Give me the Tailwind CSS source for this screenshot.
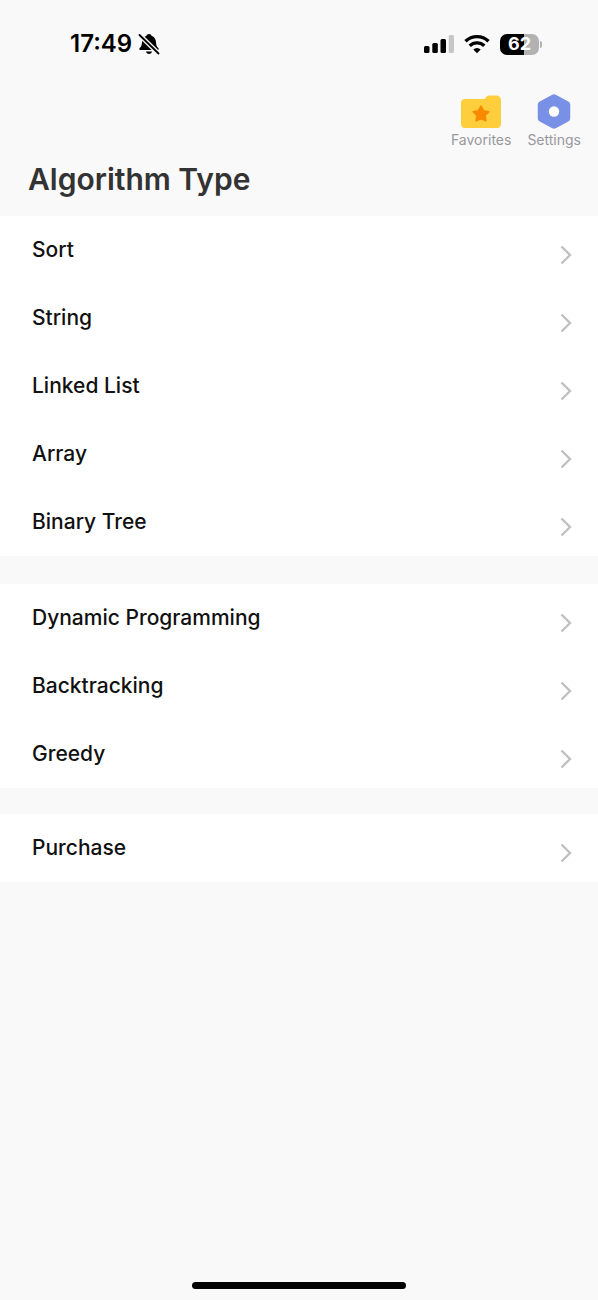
<!DOCTYPE html>
<html lang="en">

<head>
    <meta charset="UTF-8">
    <meta name="viewport" content="width=device-width, initial-scale=1.0">
    <title>Algorithm Type</title>
    <script src="https://cdn.jsdelivr.net/npm/@tailwindcss/browser@4"></script>
</head>

<body class="flex min-h-screen flex-col bg-[#f9f9f9] font-['Inter',sans-serif] text-black">

    <!-- Chevron shared by all rows -->
    <svg class="hidden">
        <symbol id="chevron" viewBox="0 0 12 20">
            <path d="M1.500 1.500 10 10l-8.500 8.500" fill="none" stroke="#c0c0c2" stroke-width="2.400" />
        </symbol>
    </svg>

    <!-- Status bar -->
    <div class="flex h-[88px] items-center justify-between pr-14 pl-[70px]">
        <div class="flex items-center gap-1.5">
            <span class="text-2xl leading-7 font-semibold">17:49</span>
            <svg class="h-[22px] w-[22px]" viewBox="0 0 22 22">
                <path d="M11 1c1.400 0 2.300.7 2.500 1.800 2.900.9 4.300 3.300 4.500 6.400.2 3.300.7 4.300 2.300 5.700.8.8.4 2.100-.9 2.100H2.600c-1.300 0-1.700-1.300-.9-2.100C3.300 13.500 3.800 12.500 4 9.200c.2-3.100 1.600-5.500 4.500-6.400C8.700 1.700 9.600 1 11 1Z" />
                <path d="M8 18.500h6c-.3 1.500-1.500 2.500-3 2.500s-2.700-1-3-2.500Z" />
                <path d="M1.500 2 20.500 20.500" stroke="#f9f9f9" stroke-width="4.600" />
                <path d="M1.500 2 20.500 20.500" stroke="#000" stroke-width="1.800" stroke-linecap="round" />
            </svg>
        </div>
        <div class="flex items-center gap-2.5">
            <svg class="h-[18px] w-[30px]" viewBox="0 0 30 18">
                <rect x="0" y="11" width="5.500" height="7" rx="1.500" />
                <rect x="8.300" y="8" width="5.500" height="10" rx="1.500" />
                <rect x="16.500" y="4" width="5.500" height="14" rx="1.500" />
                <rect x="24.700" y="0" width="5.300" height="18" rx="1.500" fill="#c6c6c6" />
            </svg>
            <svg class="h-5 w-[26px]" viewBox="0 0 26 20">
                <g fill="none" stroke="#000" stroke-width="3.400">
                    <path d="M1.500 7.300a16.500 16.500 0 0 1 23 0" />
                    <path d="M5.700 11.800a10.500 10.500 0 0 1 14.600 0" />
                </g>
                <path d="M13 19.300 9.300 15.500a5.300 5.300 0 0 1 7.400 0Z" />
            </svg>
            <div class="flex items-center gap-px">
                <div class="flex h-[21px] w-[39px] items-center justify-center rounded-[7px] bg-linear-to-r from-black from-62% to-[#b2b2b2] to-62% text-lg leading-5 font-bold text-white">62</div>
                <div class="h-[7px] w-0.5 rounded-r-full bg-[#b2b2b2]"></div>
            </div>
        </div>
    </div>

    <!-- Toolbar -->
    <nav class="flex justify-end gap-4 pr-[17px]">
        <a href="#" class="flex flex-col items-center text-sm leading-4 text-[#98989d]">
            <svg class="h-11 w-10" viewBox="0 0 40 44">
                <path d="M4 11h18c1.500 0 2.300-.4 3-1.500l.6-.8C26.300 7.500 27 7.500 28.500 7.500H35c3 0 5 2 5 5V36c0 2.500-1.500 4-4 4H4c-2.500 0-4-1.500-4-4V15c0-2.500 1.500-4 4-4Z" fill="#ffce3d" />
                <path d="m20 18 2.600 4.700 5.200 1-3.600 3.900.7 5.300-4.900-2.200-4.900 2.200.7-5.300-3.600-3.900 5.200-1Z" fill="#f98a00" stroke="#f98a00" stroke-width="1.500" stroke-linejoin="round" />
            </svg>
            Favorites
        </a>
        <a href="#" class="flex flex-col items-center text-sm leading-4 text-[#98989d]">
            <svg class="h-11 w-10" viewBox="0 0 40 44">
                <path d="m20 10 12.500 6.700v13.600L20 37 7.500 30.300V16.700Z" fill="#7890e5" stroke="#7890e5" stroke-width="7.500" stroke-linejoin="round" />
                <circle cx="20" cy="23.500" r="5.200" fill="#fff" />
            </svg>
            Settings
        </a>
    </nav>

    <h1 class="px-7 pt-2.5 pb-4 text-[30px] leading-[42px] font-semibold text-[#333]">Algorithm Type</h1>

    <!-- Algorithm groups -->
    <main class="text-[21px] leading-7 font-medium text-[#111]">
        <ul class="mb-7 bg-white">
            <li><a href="#" class="flex h-[68px] items-center justify-between pr-[26px] pl-8">Sort<svg class="mt-2.5 h-5 w-3"><use href="#chevron" /></svg></a></li>
            <li><a href="#" class="flex h-[68px] items-center justify-between pr-[26px] pl-8">String<svg class="mt-2.5 h-5 w-3"><use href="#chevron" /></svg></a></li>
            <li><a href="#" class="flex h-[68px] items-center justify-between pr-[26px] pl-8">Linked List<svg class="mt-2.5 h-5 w-3"><use href="#chevron" /></svg></a></li>
            <li><a href="#" class="flex h-[68px] items-center justify-between pr-[26px] pl-8">Array<svg class="mt-2.5 h-5 w-3"><use href="#chevron" /></svg></a></li>
            <li><a href="#" class="flex h-[68px] items-center justify-between pr-[26px] pl-8">Binary Tree<svg class="mt-2.5 h-5 w-3"><use href="#chevron" /></svg></a></li>
        </ul>
        <ul class="mb-[26px] bg-white">
            <li><a href="#" class="flex h-[68px] items-center justify-between pr-[26px] pl-8">Dynamic Programming<svg class="mt-2.5 h-5 w-3"><use href="#chevron" /></svg></a></li>
            <li><a href="#" class="flex h-[68px] items-center justify-between pr-[26px] pl-8">Backtracking<svg class="mt-2.5 h-5 w-3"><use href="#chevron" /></svg></a></li>
            <li><a href="#" class="flex h-[68px] items-center justify-between pr-[26px] pl-8">Greedy<svg class="mt-2.5 h-5 w-3"><use href="#chevron" /></svg></a></li>
        </ul>
        <ul class="bg-white">
            <li><a href="#" class="flex h-[68px] items-center justify-between pr-[26px] pl-8">Purchase<svg class="mt-2.5 h-5 w-3"><use href="#chevron" /></svg></a></li>
        </ul>
    </main>

    <!-- Home indicator -->
    <div class="mx-auto mt-auto mb-[11px] h-[7px] w-[214px] rounded-full bg-black"></div>

</body>

</html>
